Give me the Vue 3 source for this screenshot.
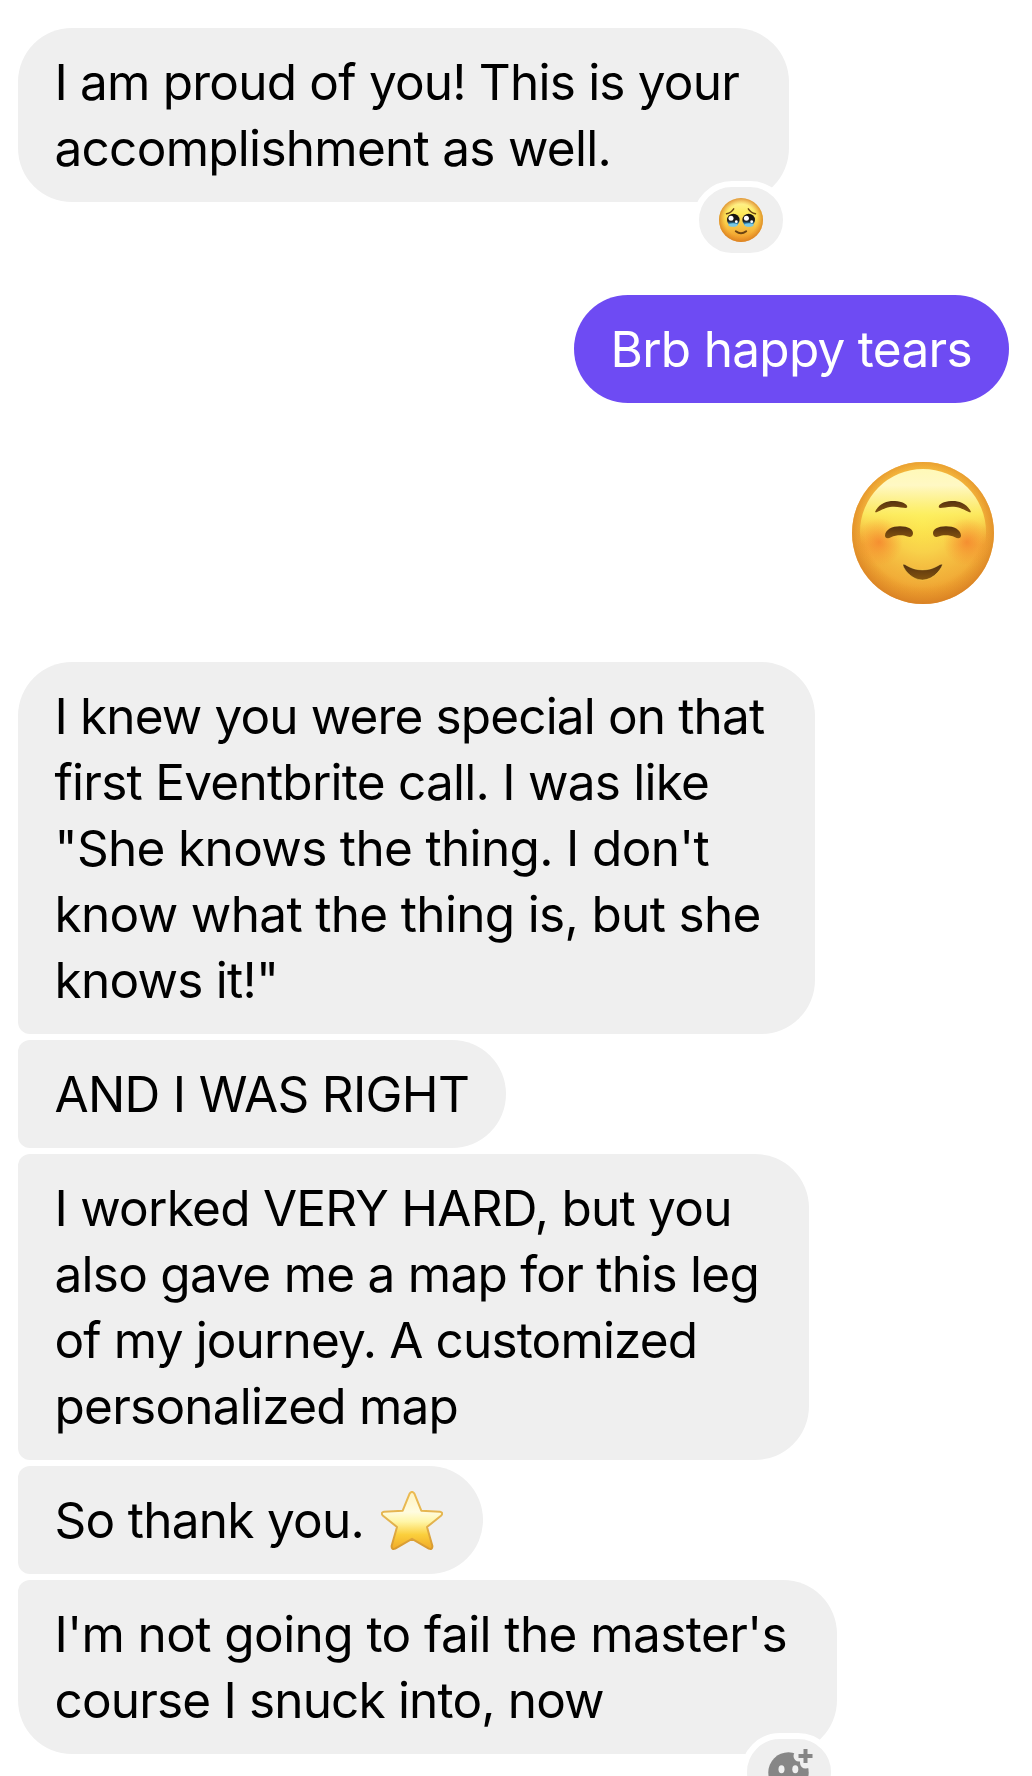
<script setup>
const groups = [
  {
    side: 'in',
    messages: [
      {
        width: 771,
        shape: 'solo',
        reaction: 'tears',
        lines: [
          { text: 'I am proud of you! This is your', tracking: -0.796 },
          { text: 'accomplishment as well.', tracking: -0.725 },
        ],
      },
    ],
  },
  {
    side: 'out',
    messages: [
      { width: 435, shape: 'solo', lines: [{ text: 'Brb happy tears', tracking: -0.713 }] },
    ],
  },
  { side: 'sticker', messages: [] },
  {
    side: 'in',
    messages: [
      {
        width: 797,
        shape: 'first',
        lines: [
          { text: 'I knew you were special on that', tracking: -0.86 },
          { text: 'first Eventbrite call. I was like', tracking: -0.75 },
          { text: '"She knows the thing. I don\'t', tracking: -0.66 },
          { text: 'know what the thing is, but she', tracking: -0.665 },
          { text: 'knows it!"', tracking: -0.753 },
        ],
      },
      { width: 488, shape: 'middle', lines: [{ text: 'AND I WAS RIGHT', tracking: -0.68 }] },
      {
        width: 791,
        shape: 'middle',
        lines: [
          { text: 'I worked VERY HARD, but you', tracking: -0.74 },
          { text: 'also gave me a map for this leg', tracking: -0.745 },
          { text: 'of my journey. A customized', tracking: -0.857 },
          { text: 'personalized map', tracking: -0.76 },
        ],
      },
      { width: 465, shape: 'middle', lines: [{ text: 'So thank you.', tracking: -0.72, star: true }] },
      {
        width: 819,
        shape: 'last',
        reaction: 'add',
        lines: [
          { text: "I'm not going to fail the master's", tracking: -0.58 },
          { text: 'course I snuck into, now', tracking: -0.837 },
        ],
      },
    ],
  },
]
</script>

<template>
  <main class="chat">
    <section v-for="(group, g) in groups" :key="g" class="group" :class="group.side">
      <svg v-if="group.side === 'sticker'" class="smile" viewBox="0 0 142 142">
        <defs>
          <linearGradient id="smBase" x1="0" y1="0" x2="0" y2="1">
            <stop offset="0" stop-color="#f6b233" />
            <stop offset=".5" stop-color="#f4b239" />
            <stop offset="1" stop-color="#eb9c2c" />
          </linearGradient>
          <radialGradient id="smGlow" cx=".5" cy=".42" r=".54">
            <stop offset="0" stop-color="#fdea4c" />
            <stop offset=".4" stop-color="#f9d54c" stop-opacity=".9" />
            <stop offset=".8" stop-color="#f4b840" stop-opacity=".5" />
            <stop offset="1" stop-color="#ee982b" stop-opacity="0" />
          </radialGradient>
          <linearGradient id="smTop" x1="0" y1="0" x2="0" y2="1">
            <stop offset="0" stop-color="#fff9b8" />
            <stop offset=".13" stop-color="#fff8c4" />
            <stop offset=".36" stop-color="#fdf164" stop-opacity=".85" />
            <stop offset=".6" stop-color="#fbdc48" stop-opacity="0" />
          </linearGradient>
          <radialGradient id="smRim" cx=".5" cy=".47" r=".535">
            <stop offset=".76" stop-color="#dd8424" stop-opacity="0" />
            <stop offset="1" stop-color="#d27620" stop-opacity=".75" />
          </radialGradient>
          <radialGradient id="smCheek">
            <stop offset="0" stop-color="#f57a2a" stop-opacity=".7" />
            <stop offset="1" stop-color="#f98c2c" stop-opacity="0" />
          </radialGradient>
          <linearGradient id="smBrown" x1="0" y1="0" x2="0" y2="1">
            <stop offset="0" stop-color="#55310f" />
            <stop offset="1" stop-color="#84540f" />
          </linearGradient>
          <g id="smHalf">
            <circle cx="27" cy="80" r="24" fill="url(#smCheek)" />
            <path
              d="M23 50C27 41 36 38.5 43 39C51 39.5 56.5 43 55 45.5C54 47.2 46 43.6 38 45C30 46.400 25 51.500 23 50Z"
              fill="url(#smBrown)"
            />
            <path
              d="M33 73.500C33.500 67.500 40 64.300 48 64.300C56.500 64.300 61 67.500 61 71.200C61 74.300 58.500 75.800 55.500 74.500C51 72.700 44 72.900 39 75.300C35.500 77 32.800 76 33 73.500Z"
              fill="url(#smBrown)"
            />
          </g>
        </defs>
        <circle cx="71" cy="71" r="71" fill="url(#smBase)" />
        <circle cx="71" cy="71" r="71" fill="url(#smGlow)" />
        <circle cx="71" cy="71" r="71" fill="url(#smRim)" />
        <ellipse cx="71" cy="70" rx="63" ry="63" fill="url(#smTop)" />
        <use href="#smHalf" />
        <use href="#smHalf" transform="translate(142 0) scale(-1 1)" />
        <path
          d="M51 102.500C52 101.700 53.500 102.800 55 103.700C64 109.300 77 109.300 86 103.700C87.500 102.800 89.300 101.500 90.300 102.600C90.900 104 83 118 70.500 118C58 118 50.200 104.500 51 102.500Z"
          fill="url(#smBrown)"
          stroke="#fbd454"
          stroke-width=".8"
          stroke-opacity=".6"
        />
      </svg>

      <div
        v-for="(message, m) in group.messages"
        :key="m"
        class="bubble"
        :class="message.shape"
        :style="{ width: message.width + 'px' }"
      >
        <div v-for="line in message.lines" :key="line.text" class="line">
          <span :style="{ letterSpacing: line.tracking + 'px' }">{{ line.text }}</span>
          <svg v-if="line.star" class="star" viewBox="0 0 62 59">
            <defs>
              <linearGradient id="stFill" x1="0" y1="0" x2="0" y2="1">
                <stop offset="0" stop-color="#fff3c0" />
                <stop offset=".35" stop-color="#fffce0" />
                <stop offset=".52" stop-color="#fff6a8" />
                <stop offset=".75" stop-color="#fbcf3c" />
                <stop offset="1" stop-color="#f0aa28" />
              </linearGradient>
              <linearGradient id="stEdge" x1="0" y1="0" x2="0" y2="1">
                <stop offset="0" stop-color="#ecbb52" />
                <stop offset=".5" stop-color="#e3b450" />
                <stop offset="1" stop-color="#d8992e" />
              </linearGradient>
            </defs>
            <path
              d="M28.600 2.600Q31 -.8 33.400 2.600L40.300 19.700L59 20.700Q62.600 21.600 60.300 24.500L46 36L51.400 55Q51.500 59 47.800 57.600L31 47.800L14.200 57.600Q10.500 59 10.600 55L16 36L1.700 24.500Q-.6 21.600 3 20.700L21.700 19.700Z"
              fill="url(#stFill)"
              stroke="url(#stEdge)"
              stroke-width="2"
              stroke-linejoin="round"
            />
          </svg>
        </div>

        <div v-if="message.reaction" class="reaction">
          <svg v-if="message.reaction === 'tears'" class="tears" viewBox="0 0 44 44">
            <defs>
              <linearGradient id="trFace" x1="0" y1="0" x2="0" y2="1">
                <stop offset="0" stop-color="#fff3a0" />
                <stop offset=".35" stop-color="#fdea5c" />
                <stop offset=".7" stop-color="#f8bc3e" />
                <stop offset="1" stop-color="#ee9529" />
              </linearGradient>
              <radialGradient id="trRim">
                <stop offset=".72" stop-color="#e98d1e" stop-opacity="0" />
                <stop offset="1" stop-color="#d67d22" stop-opacity=".8" />
              </radialGradient>
              <linearGradient id="trEye" x1="0" y1="0" x2="0" y2="1">
                <stop offset="0" stop-color="#16100c" />
                <stop offset=".58" stop-color="#1c1a1a" />
                <stop offset=".78" stop-color="#2c7fae" />
                <stop offset="1" stop-color="#72c9ed" />
              </linearGradient>
            </defs>
            <circle cx="22" cy="22" r="22" fill="url(#trFace)" />
            <circle cx="22" cy="22" r="22" fill="url(#trRim)" />
            <g fill="url(#trEye)">
              <circle cx="14.300" cy="22" r="6.300" />
              <circle cx="29.700" cy="22" r="6.300" />
            </g>
            <g fill="#7cc9e4">
              <ellipse cx="14" cy="27" rx="4.600" ry="1.800" />
              <ellipse cx="30" cy="27" rx="4.600" ry="1.800" />
            </g>
            <g fill="#fff">
              <circle cx="12" cy="20.300" r="2.500" />
              <circle cx="27.400" cy="20.300" r="2.500" />
              <circle cx="17.300" cy="23.700" r="1.400" />
              <circle cx="32.700" cy="23.700" r="1.400" />
            </g>
            <g fill="none" stroke="#6b4311" stroke-linecap="round">
              <path d="M7.500 15.800Q12.500 14.500 14.700 10.800M36.500 15.800Q31.500 14.500 29.300 10.800" stroke-width="1.400" />
              <path d="M16.800 33.300Q22 37.300 27.200 33.300" stroke-width="1.900" />
            </g>
          </svg>
          <svg v-else class="add" viewBox="0 0 46 46">
            <circle cx="20.500" cy="25.500" r="20.200" fill="#868686" />
            <g fill="#efefef">
              <ellipse cx="13.500" cy="22.300" rx="3" ry="4" />
              <ellipse cx="27.300" cy="22.300" rx="3" ry="4" />
            </g>
            <path d="M37.500 2.500V16M31 9H44" fill="none" stroke="#efefef" stroke-width="11" stroke-linecap="round" />
            <path d="M37.500 2V16M30.500 9H44.500" fill="none" stroke="#868686" stroke-width="4" />
            <path d="M10 33Q20.500 43 31 33Z" fill="#efefef" />
          </svg>
        </div>
      </div>
    </section>
  </main>
</template>

<style>
body {
  margin: 0;
  background: #fff;
}
</style>

<style scoped>
.chat {
  box-sizing: border-box;
  width: 1032px;
  height: 1776px;
  padding: 28px 23px 0 18px;
  overflow: hidden;
  display: flex;
  flex-direction: column;
  background: #fff;
  color: #000;
  font-family: Inter, 'Liberation Sans', sans-serif;
  font-size: 49.5px;
  line-height: 66px;
}
.group {
  display: flex;
  flex: none;
  flex-direction: column;
  align-items: flex-start;
  gap: 6px;
}
.group.out {
  align-items: flex-end;
  margin-top: 93px;
}
.group.sticker {
  align-items: flex-end;
  margin: 59px 15px 58px 0;
}
.smile {
  display: block;
  width: 142px;
  height: 142px;
}
.bubble {
  position: relative;
  box-sizing: border-box;
  padding: 21px 0 21px 36.500px;
  border-radius: 54px;
  background: #efefef;
}
.out .bubble {
  background: #6e4bf3;
  color: #fff;
}
.bubble.first {
  border-bottom-left-radius: 12px;
}
.bubble.middle {
  border-top-left-radius: 12px;
  border-bottom-left-radius: 12px;
}
.bubble.last {
  border-top-left-radius: 12px;
}
.line {
  display: flex;
  align-items: center;
  height: 66px;
  white-space: nowrap;
}
.star {
  width: 62px;
  height: 59px;
  margin: 0 0 0 17px;
}
.reaction {
  position: absolute;
  right: 0;
  bottom: -57px;
  display: flex;
  align-items: center;
  justify-content: center;
  width: 84px;
  height: 66px;
  border: 6px solid #fff;
  border-radius: 39px;
  background: #efefef;
}
.tears {
  width: 44px;
  height: 44px;
}
.add {
  width: 46px;
  height: 46px;
  margin: -5px 0 0 3px;
}
</style>
